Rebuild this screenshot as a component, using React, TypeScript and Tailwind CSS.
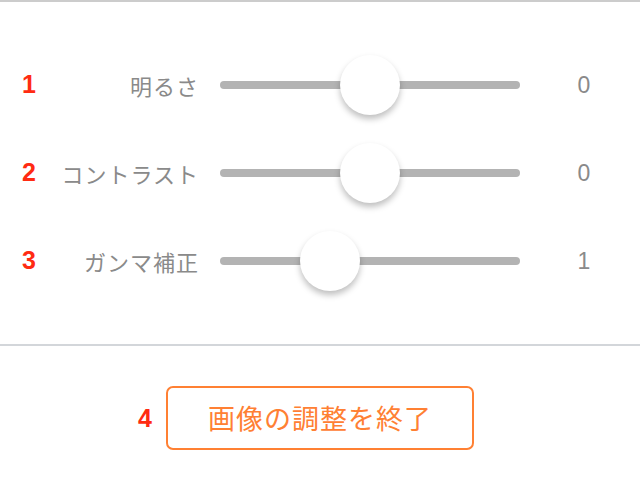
import { useState } from 'react'

const jp = { fontFamily: '"Noto Sans CJK JP", "Noto Sans", sans-serif' }

type Row = { n: string; label: string; value: number; pos: number }

function SliderRow({ row }: { row: Row }) {
  return (
    <div className="flex h-[88px] items-center">
      <div className="w-[58px] pl-[22px] text-[25px] font-bold text-[#ff2b12]" style={{ fontFamily: '"Liberation Sans", Arial, sans-serif' }}>
        {row.n}
      </div>
      <div className="w-[141px] text-right text-[22px] tracking-[1px] text-[#8a8a8a] whitespace-nowrap" style={jp}>
        {row.label}
      </div>
      {/* track + thumb */}
      <div className="relative ml-[21px] h-[8px] w-[300px] rounded-full bg-[#b3b3b3]">
        <div
          className="absolute top-1/2 h-[60px] w-[60px] -translate-x-1/2 -translate-y-1/2 rounded-full bg-white shadow-[0_4px_6px_rgba(0,0,0,0.25)]"
          style={{ left: `${row.pos}px` }}
        />
      </div>
      <div className="flex-1 pl-[8px] text-center text-[23px] text-[#8a8a8a]" style={{ fontFamily: '"Liberation Sans", Arial, sans-serif' }}>
        {row.value}
      </div>
    </div>
  )
}

export default function App() {
  const [rows] = useState<Row[]>([
    { n: '1', label: '明るさ', value: 0, pos: 150 },
    { n: '2', label: 'コントラスト', value: 0, pos: 150 },
    { n: '3', label: 'ガンマ補正', value: 1, pos: 110 },
  ])

  return (
    <div className="h-[498px] w-[640px] bg-white">
      <div className="border-t-2 border-[#cccccc] pt-[39px] pb-[39px]">
        {rows.map(r => (
          <SliderRow key={r.n} row={r} />
        ))}
      </div>
      <div className="border-t-2 border-[#d3d6da]">
        <div className="flex items-center pt-[40px] pl-[138px]">
          <span className="mr-[14px] mt-[2px] text-[25px] font-bold text-[#ff2b12]" style={{ fontFamily: '"Liberation Sans", Arial, sans-serif' }}>
            4
          </span>
          <button className="flex h-[64px] w-[308px] items-center justify-center rounded-[7px] border-2 border-[#ff8033] bg-white text-[27px] tracking-[1px] text-[#ff8033]" style={jp}>
            画像の調整を終了
          </button>
        </div>
      </div>
    </div>
  )
}
